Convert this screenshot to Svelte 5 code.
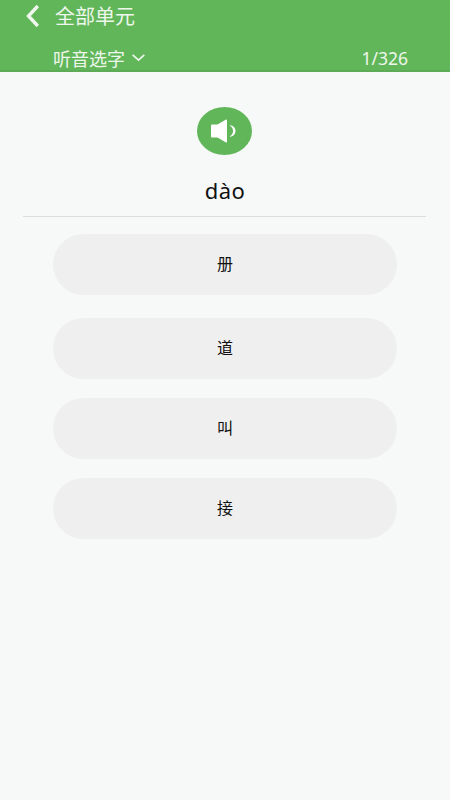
<script lang="ts">
	const options = ['册', '道', '叫', '接'];
</script>

<div class="page">
	<header>
		<div class="top">
			<svg class="back" viewBox="0 0 16 24" width="16" height="24">
				<path d="M12.8 2 L3.5 12 L12.8 22" fill="none" stroke="currentColor" stroke-width="3.4" />
			</svg>
			<span>全部单元</span>
		</div>
		<div class="sub">
			<div class="mode">
				<span>听音选字</span>
				<svg viewBox="0 0 16 10" width="15" height="9">
					<path d="M1.5 2 L8 8 L14.5 2" fill="none" stroke="currentColor" stroke-width="1.8" />
				</svg>
			</div>
			<span class="count">1/326</span>
		</div>
	</header>

	<main>
		<button class="sound" aria-label="play">
			<svg viewBox="0 0 26 24" width="26" height="24">
				<path d="M1 6.5 Q1 5.5 2 5.5 H7.5 L16 0.5 Q17 0.2 17 1.5 V22.5 Q17 23.8 16 23.5 L7.5 18.5 H2 Q1 18.5 1 17.5 Z" fill="#fff" />
				<path d="M19.5 6 Q25.5 7 25.5 12 Q25.5 17 19.5 18 Q23.2 15 23.2 12 Q23.2 9 19.5 6 Z" fill="#fff" />
			</svg>
		</button>
		<div class="pinyin">dào</div>
		<div class="rule"></div>
		<div class="options">
			{#each options as o}
				<div class="option">{o}</div>
			{/each}
		</div>
	</main>
</div>

<style>
	:global(body) {
		background: #f7f9f8;
	}
	.page {
		width: 450px;
		height: 800px;
		overflow: hidden;
		background: #f7f9f8;
		font-family: 'Noto Sans CJK SC', 'Noto Sans', sans-serif;
	}
	header {
		height: 72px;
		box-sizing: border-box;
		background: #62b65a;
		border-bottom: 2px solid #5dab56;
		color: #eef7ec;
		padding: 0 42px 0 25px;
	}
	.top {
		height: 32px;
		display: flex;
		align-items: center;
		gap: 14px;
		font-size: 20px;
		padding-bottom: 1px;
		box-sizing: border-box;
	}
	.sub {
		height: 38px;
		padding-left: 28px;
		display: flex;
		align-items: center;
		justify-content: space-between;
		font-size: 18px;
		padding-top: 13px;
		box-sizing: border-box;
	}
	.mode {
		display: flex;
		align-items: center;
		gap: 6px;
	}
	.count {
		font-family: 'Noto Sans', sans-serif;
		font-size: 17.5px;
	}
	main {
		display: flex;
		flex-direction: column;
		align-items: center;
	}
	.sound {
		width: 55px;
		height: 48px;
		margin-top: 35px;
		margin-left: -1px;
		border: none;
		padding: 0 3px 0 0;
		border-radius: 50%;
		background: #62b65a;
		display: flex;
		align-items: center;
		justify-content: center;
	}
	.pinyin {
		margin-top: 20px;
		font-family: 'Noto Sans', sans-serif;
		font-size: 22px;
		line-height: 30px;
		color: #111;
		letter-spacing: 0.5px;
	}
	.rule {
		width: 403px;
		height: 1px;
		margin-top: 11px;
		margin-left: -1px;
		background: #d8dfdc;
	}
	.options {
		margin-top: 17px;
		display: flex;
		flex-direction: column;
		gap: 20px;
	}
	.option {
		width: 344px;
		height: 61px;
		box-sizing: border-box;
		padding-bottom: 3px;
		border-radius: 31px;
		background: #efefef;
		display: flex;
		align-items: center;
		justify-content: center;
		font-size: 16px;
		color: #111;
	}
	/* rows are not evenly spaced in the source */
	.option:nth-child(2) {
		margin-top: 3px;
	}
	.option:nth-child(3) {
		margin-top: -1px;
	}
	.option:nth-child(4) {
		margin-top: -1px;
	}
</style>
